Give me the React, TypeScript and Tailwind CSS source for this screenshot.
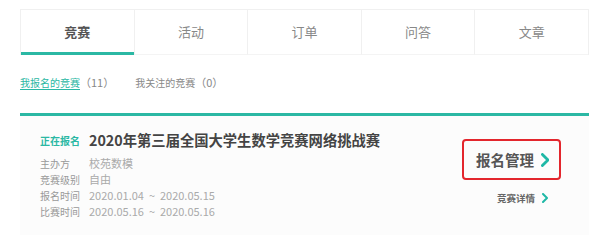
const tabs = ["竞赛", "活动", "订单", "问答", "文章"];

const rows = [
  ["主办方", "校苑数模"],
  ["竞赛级别", "自由"],
  ["报名时间", "2020.01.04 ~ 2020.05.15"],
  ["比赛时间", "2020.05.16 ~ 2020.05.16"],
];

function Chevron({ size = 12 }: { size?: number }) {
  return (
    <svg width={size * 0.6} height={size} viewBox="0 0 6 10" fill="none">
      <path d="M1 1l4 4-4 4" stroke="#1fb8a6" strokeWidth="2" strokeLinecap="round" strokeLinejoin="round" />
    </svg>
  );
}

export default function App() {
  return (
    <div className="w-[600px] h-[245px] bg-white pt-[9px] pl-[20px] pr-[11px] font-['Noto_Sans_CJK_SC','Noto_Sans',sans-serif] overflow-hidden">
      {/* 顶部标签 */}
      <div className="flex border border-[#f0f0f0] border-b-0">
        {tabs.map((t, i) => (
          <div
            key={t}
            className={
              i === 0
                ? "flex-1 h-[45px] flex items-center justify-center text-[13px] font-bold text-[#555] border-b-[3px] border-[#2bb8a4] pt-[1px]"
                : "flex-1 h-[45px] flex items-center justify-center text-[13px] text-[#888] border-l border-[#f0f0f0] border-b border-b-[#f4f4f4]"
            }
          >
            {t}
          </div>
        ))}
      </div>

      {/* 子标签 */}
      <div className="flex items-center h-[58px] text-[10px] pb-[3px]">
        <span className="text-[#2bb8a4] underline underline-offset-2">我报名的竞赛</span>
        <span className="text-[#888] text-[11px]">（11）</span>
        <span className="text-[#888] ml-[21px]">我关注的竞赛</span>
        <span className="text-[#888] text-[11px]">（0）</span>
      </div>

      {/* 竞赛卡片 */}
      <div className="border-t-[3px] border-[#2bb8a4] bg-[#fcfcfc] h-[122px] flex pl-[20px] pr-[28px] pt-[12px]">
        <div className="flex-1">
          <div className="flex items-center h-[24px]">
            <span className="w-[49px] text-[10px] text-[#2bb8a4] font-bold">正在报名</span>
            <span className="text-[14.3px] font-bold text-[#444]">2020年第三届全国大学生数学竞赛网络挑战赛</span>
          </div>
          <div className="mt-[3px]">
            {rows.map(([k, v]) => (
              <div key={k} className="flex items-center h-[16px]">
                <span className="w-[49px] text-[10px] text-[#999]">{k}</span>
                <span className="text-[11px] text-[#aaa] whitespace-pre">{v.replace(" ~ ", "  ~  ")}</span>
              </div>
            ))}
          </div>
        </div>
        <div className="flex flex-col items-end pt-[11px]">
          <div className="flex items-center gap-[7px] border-2 border-[#e3262d] rounded-[4px] h-[41px] w-[99px] pl-[12px]">
            <span className="text-[14.5px] font-bold text-[#555]">报名管理</span>
            <Chevron size={14} />
          </div>
          <div className="flex items-center gap-[7px] mt-[11px] pr-[13px]">
            <span className="text-[9.5px] font-bold text-[#666]">竞赛详情</span>
            <Chevron size={10} />
          </div>
        </div>
      </div>
    </div>
  );
}
